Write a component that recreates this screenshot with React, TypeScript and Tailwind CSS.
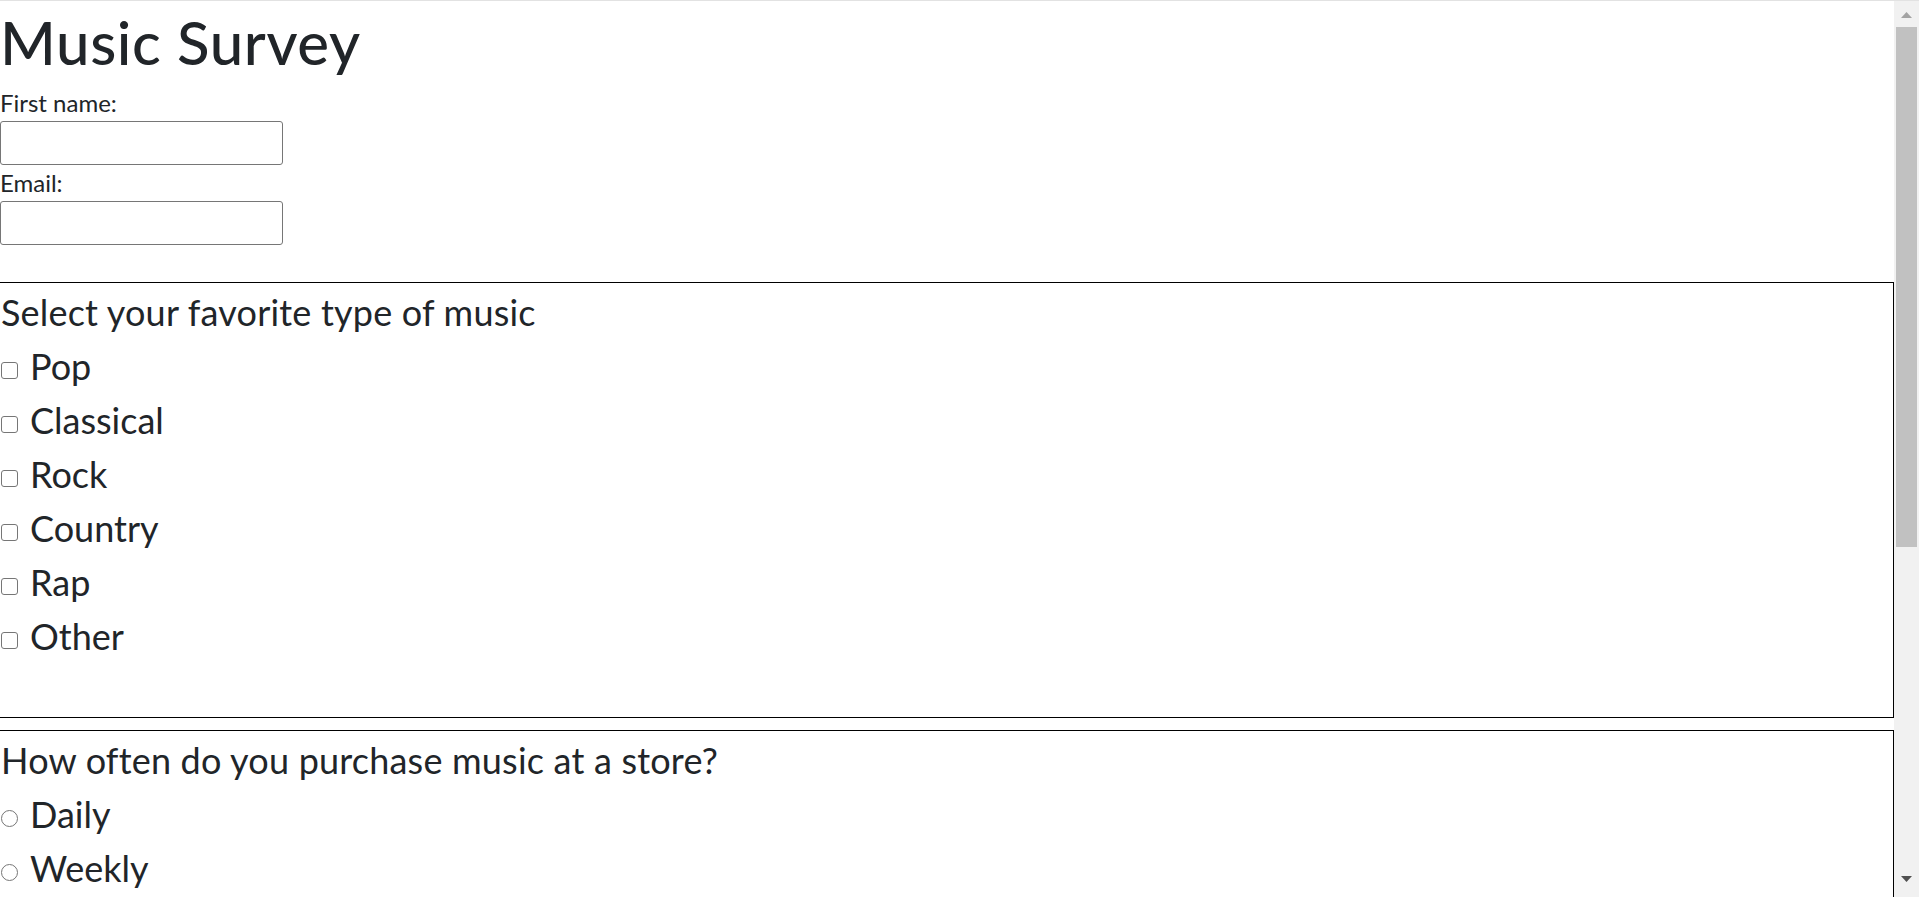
const musicTypes = ['Pop', 'Classical', 'Rock', 'Country', 'Rap', 'Other'];
const frequencies = ['Daily', 'Weekly', 'Monthly', 'Yearly', 'Never'];
const devices = ['Phone', 'Computer', 'Radio', 'Record player', 'Other'];
const formats = ['Streaming', 'CD', 'Vinyl', 'Cassette'];

function Box({ round }: { round?: boolean }) {
  return (
    <span
      className={`inline-block h-[17px] w-[17px] border border-[#767676] bg-white align-baseline ml-[1px] mr-[12px] mb-[1px] ${
        round ? 'rounded-full' : 'rounded-[3px]'
      }`}
    />
  );
}

function Group({ legend, options, round }: { legend: string; options: string[]; round?: boolean }) {
  return (
    <fieldset className="border-t border-r border-b border-black mb-[12px]">
      <div className="text-[36px] leading-[54px] pt-[2px] pl-[1px] tracking-[0.2px]">{legend}</div>
      {options.map((opt) => (
        <label key={opt} className="block text-[36px] leading-[54px]">
          <Box round={round} />
          {opt}
        </label>
      ))}
      <div className="h-[54px]" />
    </fieldset>
  );
}

function Scrollbar() {
  return (
    <div className="flex w-[25px] shrink-0 flex-col items-center bg-[#f1f1f1]">
      <div className="flex h-[26px] items-start pt-[11px]">
        <svg width="11" height="6" viewBox="0 0 11 6">
          <path d="M5.5 0 L11 6 L0 6 Z" fill="#a3a3a3" />
        </svg>
      </div>
      <div className="h-[520px] w-[21px] bg-[#c1c1c1]" />
      <div className="flex-1" />
      <div className="flex h-[26px] items-start pt-[5px]">
        <svg width="11" height="6" viewBox="0 0 11 6">
          <path d="M0 0 L11 0 L5.5 6 Z" fill="#505050" />
        </svg>
      </div>
    </div>
  );
}

export default function App() {
  return (
    <div className="flex h-screen flex-col overflow-hidden border-t border-[#e2e2e2] bg-white text-[#212529] font-['Lato',sans-serif]">
      <div className="flex min-h-0 flex-1">
        <main className="min-w-0 flex-1 overflow-hidden">
          <h1 className="text-[60px] leading-[72px] font-medium pt-[5px] mb-[7px] tracking-[0.6px]">Music Survey</h1>
          <form>
            <label className="block text-[24px] leading-[36px]">First name:</label>
            <input type="text" className="block h-[44px] w-[283px] rounded-[3px] border border-[#767676] bg-white" />
            <label className="block text-[24px] leading-[36px]">Email:</label>
            <input type="email" className="block h-[44px] w-[283px] rounded-[3px] border border-[#767676] bg-white" />
            <div className="h-[37px]" />
            <Group legend="Select your favorite type of music" options={musicTypes} />
            <Group legend="How often do you purchase music at a store?" options={frequencies} round />
            <Group legend="How do you usually listen to music?" options={devices} round />
            <Group legend="Which formats do you own?" options={formats} />
            <label className="block text-[36px] leading-[54px]">Comments:</label>
            <textarea className="block h-[200px] w-[600px] rounded-[3px] border border-[#767676]" />
            <button type="submit" className="mt-[24px] mb-[60px] rounded-[6px] bg-[#0d6efd] px-[18px] py-[9px] text-[24px] text-white">
              Submit
            </button>
          </form>
        </main>
        <Scrollbar />
      </div>
    </div>
  );
}
